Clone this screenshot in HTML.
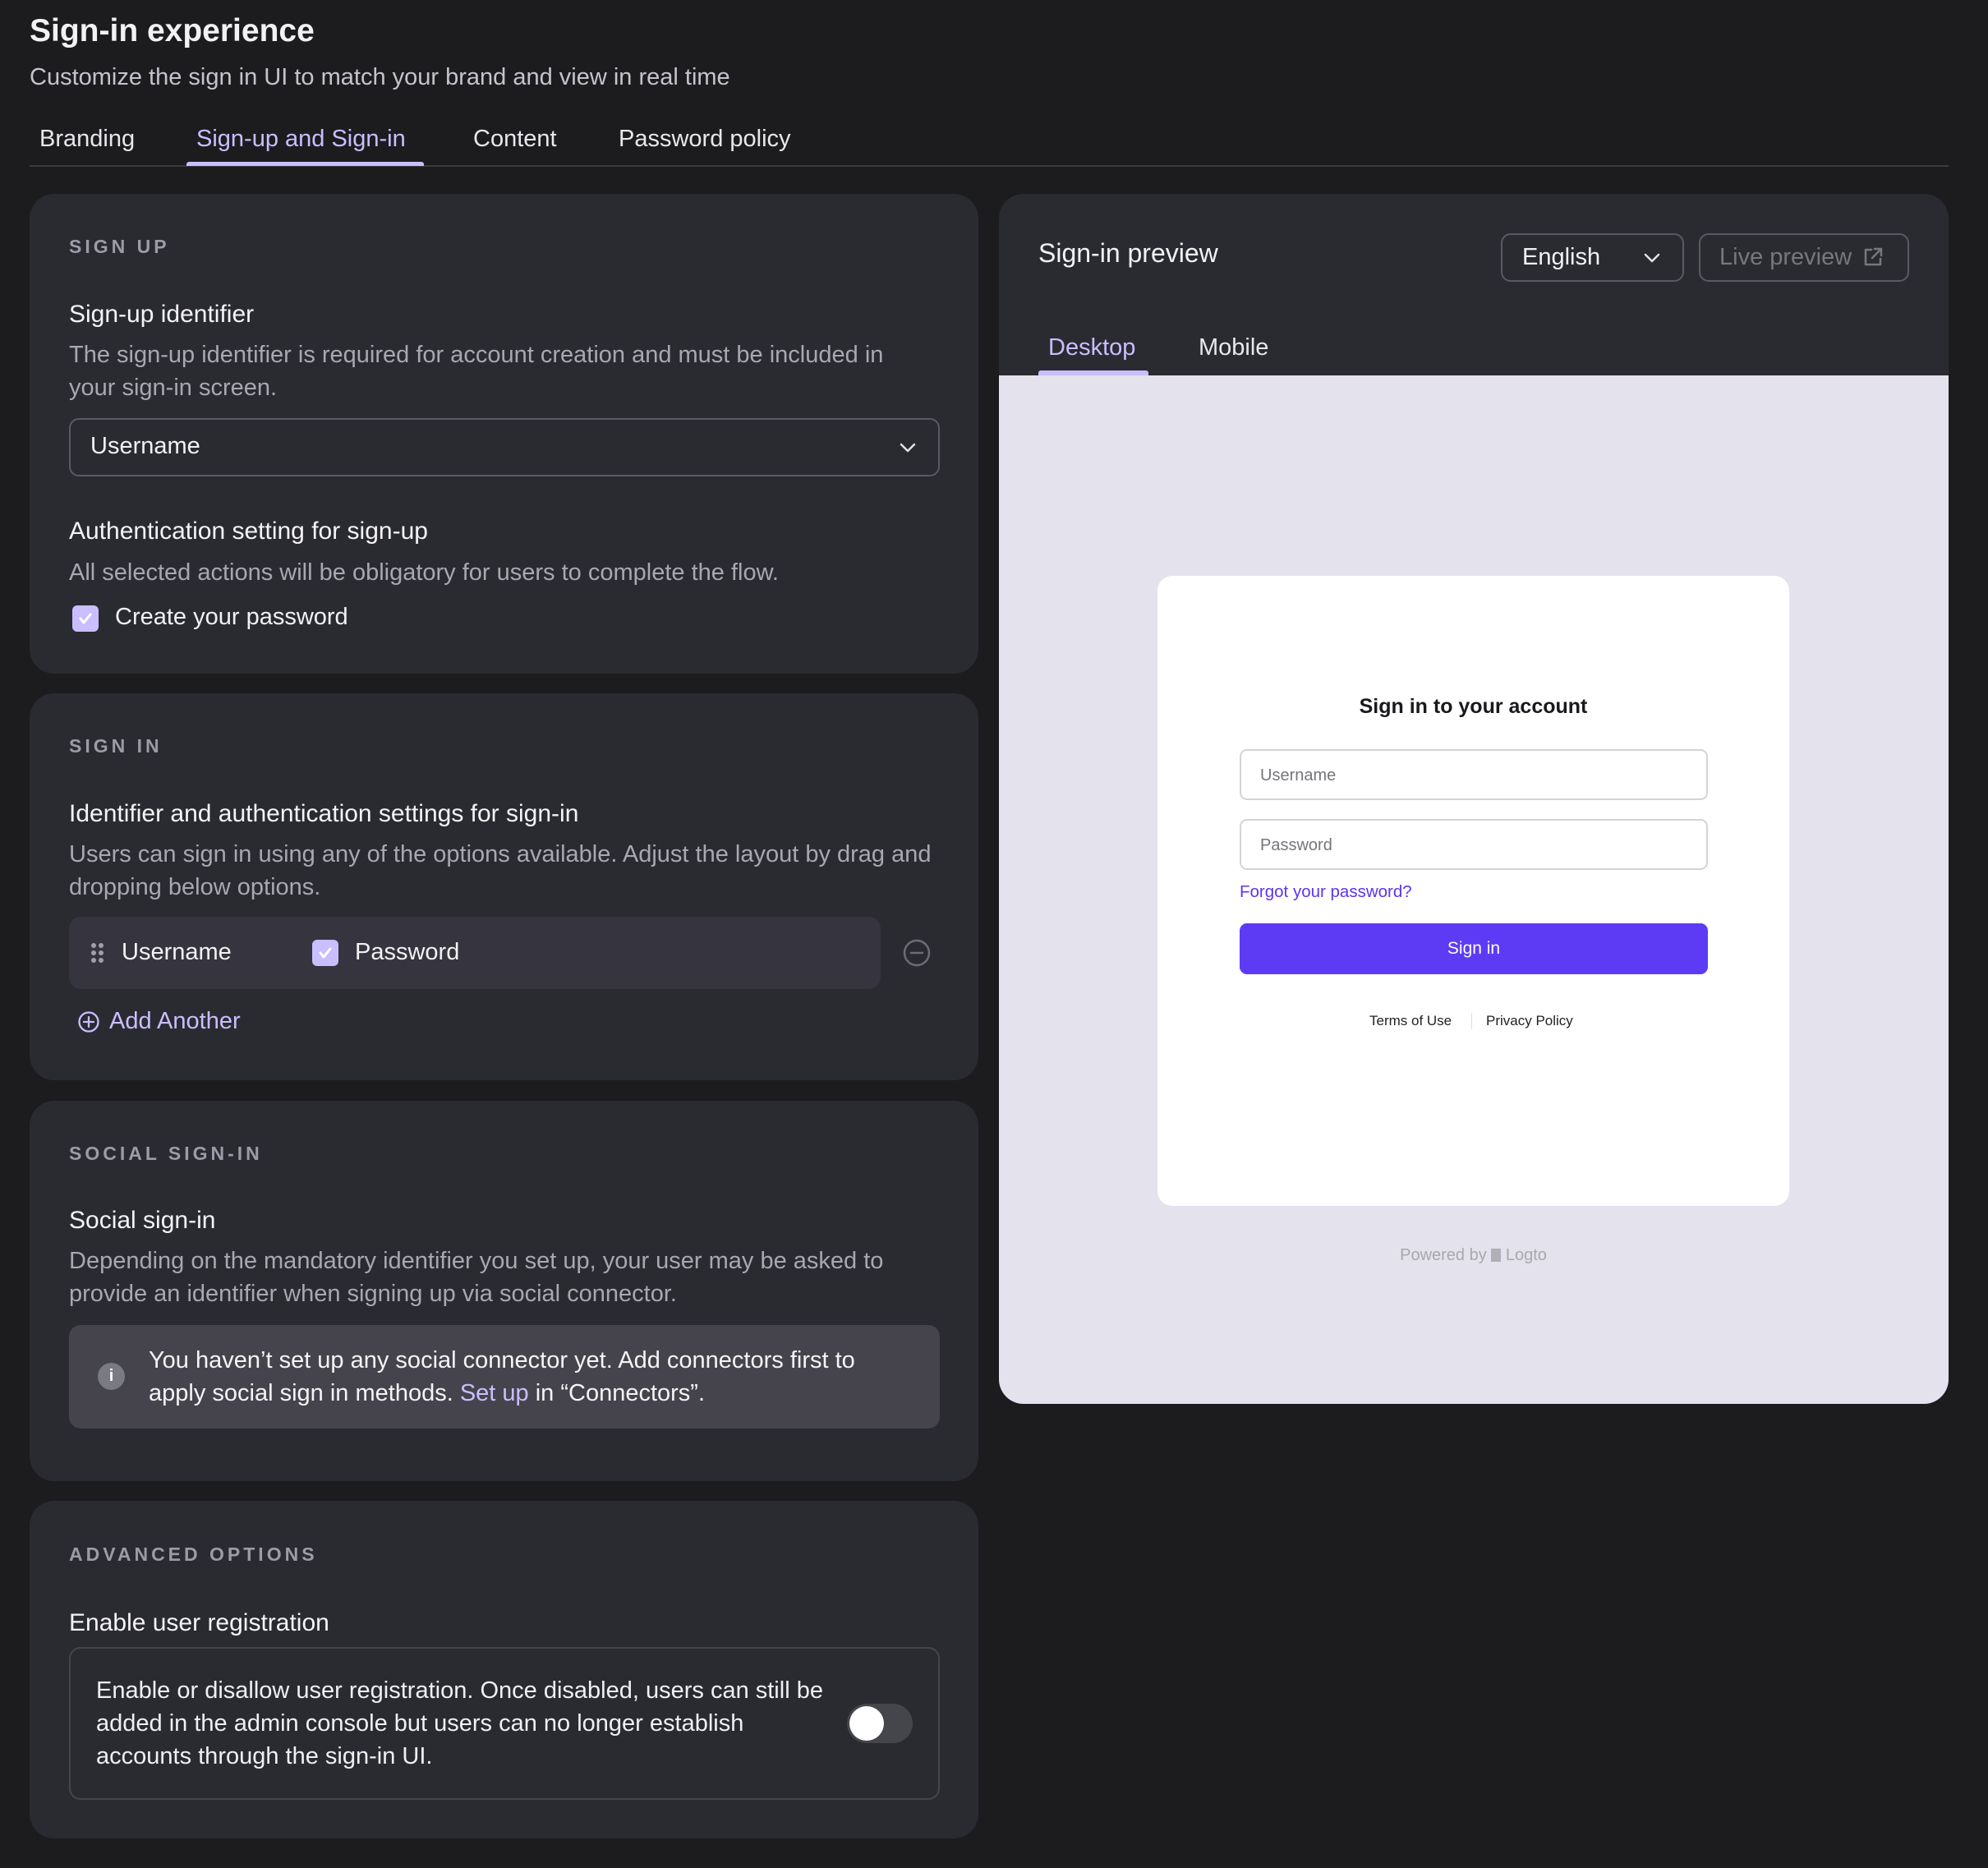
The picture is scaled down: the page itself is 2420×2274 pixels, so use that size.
<!DOCTYPE html>
<html><head><meta charset="utf-8"><style>
*{box-sizing:border-box;margin:0;padding:0}
body{width:2420px;height:2274px;background:#1c1c1f;font-family:"Liberation Sans",sans-serif;color:#f2f2f4;position:relative;overflow:hidden}
.a{position:absolute;white-space:nowrap}
.card{position:absolute;background:#2a2a31;border-radius:30px}
.cap{font-size:23px;font-weight:700;letter-spacing:4px;color:#9c9ca6}
.h{font-size:30px;font-weight:500;color:#f4f4f6}
.d{font-size:29px;color:#a8a8b0;line-height:40px;white-space:normal}
.cb{position:absolute;width:32px;height:32px;border-radius:6px;background:#cabeff}
.cb svg{position:absolute;left:5px;top:5px}
</style></head><body>
<div class="a" style="left:36px;top:16px;font-size:39px;font-weight:600">Sign-in experience</div>
<div class="a" style="left:36px;top:78px;font-size:29px;color:#c4c4cc">Customize the sign in UI to match your brand and view in real time</div>
<div class="a" style="left:48px;top:153px;font-size:29px;color:#e8e8ec">Branding</div>
<div class="a" style="left:239px;top:153px;font-size:29px;color:#cabeff">Sign-up and Sign-in</div>
<div class="a" style="left:576px;top:153px;font-size:29px;color:#e8e8ec">Content</div>
<div class="a" style="left:753px;top:153px;font-size:29px;color:#e8e8ec">Password policy</div>
<div class="a" style="left:36px;top:201px;width:2336px;height:2px;background:#3a3a40"></div>
<div class="a" style="left:227px;top:197px;width:289px;height:5px;border-radius:3px 3px 0 0;background:#cabeff"></div>

<!-- card 1 -->
<div class="card" style="left:36px;top:236px;width:1155px;height:584px"></div>
<div class="a cap" style="left:84px;top:287px">SIGN UP</div>
<div class="a h" style="left:84px;top:366px">Sign-up identifier</div>
<div class="a d" style="left:84px;top:412px;width:1080px">The sign-up identifier is required for account creation and must be included in<br>your sign-in screen.</div>
<div class="a" style="left:84px;top:509px;width:1060px;height:71px;border:2px solid #5a5a62;border-radius:12px"></div>
<div class="a" style="left:110px;top:527px;font-size:29px">Username</div>
<svg class="a" style="left:1093px;top:533px" width="24" height="24" viewBox="0 0 24 24"><path d="M4 8l8 8 8-8" fill="none" stroke="#e0e0e6" stroke-width="2.5" stroke-linecap="round" stroke-linejoin="round"/></svg>
<div class="a h" style="left:84px;top:630px">Authentication setting for sign-up</div>
<div class="a d" style="left:84px;top:677px">All selected actions will be obligatory for users to complete the flow.</div>
<div class="cb" style="left:88px;top:737px"><svg width="22" height="22" viewBox="0 0 22 22"><path d="M5 11l4 5 8-10" fill="none" stroke="#fff" stroke-width="3" stroke-linecap="round" stroke-linejoin="round"/></svg></div>
<div class="a" style="left:140px;top:735px;font-size:29px">Create your password</div>

<!-- card 2 -->
<div class="card" style="left:36px;top:844px;width:1155px;height:471px"></div>
<div class="a cap" style="left:84px;top:895px">SIGN IN</div>
<div class="a h" style="left:84px;top:974px">Identifier and authentication settings for sign-in</div>
<div class="a d" style="left:84px;top:1020px;width:1080px">Users can sign in using any of the options available. Adjust the layout by drag and<br>dropping below options.</div>
<div class="a" style="left:84px;top:1116px;width:988px;height:88px;background:#35343f;border-radius:14px"></div>
<svg class="a" style="left:110px;top:1147px" width="18" height="26" viewBox="0 0 18 26"><g fill="#a0a0a8"><circle cx="4" cy="4" r="3"/><circle cx="13" cy="4" r="3"/><circle cx="4" cy="13" r="3"/><circle cx="13" cy="13" r="3"/><circle cx="4" cy="22" r="3"/><circle cx="13" cy="22" r="3"/></g></svg>
<div class="a" style="left:148px;top:1143px;font-size:29px">Username</div>
<div class="cb" style="left:380px;top:1144px"><svg width="22" height="22" viewBox="0 0 22 22"><path d="M5 11l4 5 8-10" fill="none" stroke="#fff" stroke-width="3" stroke-linecap="round" stroke-linejoin="round"/></svg></div>
<div class="a" style="left:432px;top:1143px;font-size:29px">Password</div>
<svg class="a" style="left:1098px;top:1142px" width="36" height="36" viewBox="0 0 36 36"><circle cx="18" cy="18" r="15" fill="none" stroke="#6c6c74" stroke-width="2.5"/><path d="M11 18h14" stroke="#6c6c74" stroke-width="2.5" stroke-linecap="round"/></svg>
<svg class="a" style="left:94px;top:1230px" width="28" height="28" viewBox="0 0 28 28"><circle cx="14" cy="14" r="11.5" fill="none" stroke="#cabeff" stroke-width="2.3"/><path d="M14 8v12M8 14h12" stroke="#cabeff" stroke-width="2.3" stroke-linecap="round"/></svg>
<div class="a" style="left:133px;top:1227px;font-size:29px;color:#cabeff">Add Another</div>

<!-- card 3 -->
<div class="card" style="left:36px;top:1340px;width:1155px;height:463px"></div>
<div class="a cap" style="left:84px;top:1391px">SOCIAL SIGN-IN</div>
<div class="a h" style="left:84px;top:1469px">Social sign-in</div>
<div class="a d" style="left:84px;top:1515px;width:1080px">Depending on the mandatory identifier you set up, your user may be asked to<br>provide an identifier when signing up via social connector.</div>
<div class="a" style="left:84px;top:1613px;width:1060px;height:126px;background:#45444c;border-radius:14px"></div>
<div class="a" style="left:119px;top:1659px;width:33px;height:33px;border-radius:50%;background:#7a7a82;color:#fff;font-size:20px;font-weight:700;text-align:center;line-height:33px">i</div>
<div class="a" style="left:181px;top:1636px;font-size:29px;line-height:40px;color:#f4f4f6">You haven’t set up any social connector yet. Add connectors first to<br>apply social sign in methods. <span style="color:#cabeff">Set up</span> in “Connectors”.</div>

<!-- card 4 -->
<div class="card" style="left:36px;top:1827px;width:1155px;height:411px"></div>
<div class="a cap" style="left:84px;top:1879px">ADVANCED OPTIONS</div>
<div class="a h" style="left:84px;top:1959px">Enable user registration</div>
<div class="a" style="left:84px;top:2005px;width:1060px;height:186px;border:2px solid #45454c;border-radius:14px"></div>
<div class="a" style="left:117px;top:2038px;font-size:29px;line-height:40px;color:#f0f0f2">Enable or disallow user registration. Once disabled, users can still be<br>added in the admin console but users can no longer establish<br>accounts through the sign-in UI.</div>
<div class="a" style="left:1031px;top:2074px;width:80px;height:48px;border-radius:24px;background:#45454c"></div>
<div class="a" style="left:1034px;top:2077px;width:42px;height:42px;border-radius:50%;background:#fff"></div>

<!-- right -->
<div class="card" style="left:1216px;top:236px;width:1156px;height:1473px;overflow:hidden">
 <div style="position:absolute;left:0;top:221px;width:100%;height:1260px;background:#e4e2ec"></div>
</div>
<div class="a" style="left:1264px;top:290px;font-size:32px;font-weight:500">Sign-in preview</div>
<div class="a" style="left:1827px;top:284px;width:223px;height:59px;border:2px solid #5a5a62;border-radius:12px"></div>
<div class="a" style="left:1853px;top:297px;font-size:29px">English</div>
<svg class="a" style="left:1999px;top:302px" width="24" height="24" viewBox="0 0 24 24"><path d="M4 8l8 8 8-8" fill="none" stroke="#e0e0e6" stroke-width="2.5" stroke-linecap="round" stroke-linejoin="round"/></svg>
<div class="a" style="left:2068px;top:284px;width:256px;height:59px;border:2px solid #5a5a62;border-radius:12px"></div>
<div class="a" style="left:2093px;top:297px;font-size:29px;color:#77777e">Live preview</div>
<svg class="a" style="left:2266px;top:299px" width="28" height="28" viewBox="0 0 28 28"><path d="M12 5H5v18h18v-7M16 4h8v8M24 4L13 15" fill="none" stroke="#77777e" stroke-width="2.5" stroke-linecap="round" stroke-linejoin="round"/></svg>
<div class="a" style="left:1276px;top:407px;font-size:29px;color:#cabeff">Desktop</div>
<div class="a" style="left:1459px;top:407px;font-size:29px;color:#e8e8ec">Mobile</div>
<div class="a" style="left:1264px;top:451px;width:134px;height:6px;border-radius:3px 3px 0 0;background:#cabeff"></div>

<div class="a" style="left:1409px;top:701px;width:769px;height:767px;background:#fff;border-radius:18px"></div>
<div class="a" style="left:1409px;top:846px;width:769px;text-align:center;font-size:25px;font-weight:600;color:#1a1a1e">Sign in to your account</div>
<div class="a" style="left:1509px;top:912px;width:570px;height:62px;border:2px solid #d4d4d8;border-radius:9px"></div>
<div class="a" style="left:1534px;top:933px;font-size:20px;color:#75757c">Username</div>
<div class="a" style="left:1509px;top:997px;width:570px;height:62px;border:2px solid #d4d4d8;border-radius:9px"></div>
<div class="a" style="left:1534px;top:1018px;font-size:20px;color:#75757c">Password</div>
<div class="a" style="left:1509px;top:1074px;font-size:20.5px;color:#5d34f2">Forgot your password?</div>
<div class="a" style="left:1509px;top:1124px;width:570px;height:62px;border-radius:9px;background:#5d3bf5;color:#fff;font-size:21px;text-align:center;line-height:62px">Sign in</div>
<div class="a" style="left:1667px;top:1233px;font-size:17px;color:#222">Terms of Use</div>
<div class="a" style="left:1791px;top:1233px;width:1px;height:20px;background:#ddd"></div>
<div class="a" style="left:1809px;top:1233px;font-size:17px;color:#222">Privacy Policy</div>
<div class="a" style="left:1409px;top:1517px;width:769px;text-align:center;font-size:20px;color:#a8a8ae">Powered by <span style="display:inline-block;width:12px;height:16px;background:#b0b0b6;vertical-align:-2px"></span> Logto</div>
</body></html>
